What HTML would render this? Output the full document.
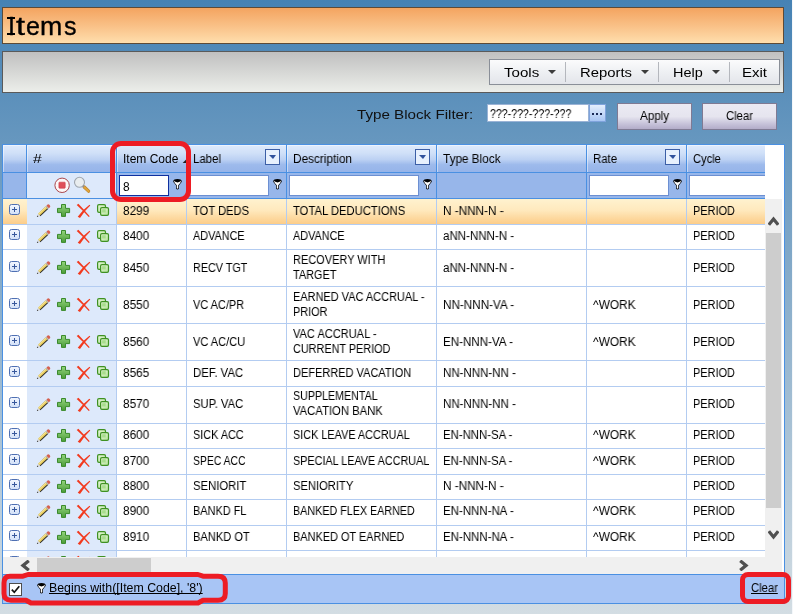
<!DOCTYPE html><html><head><meta charset="utf-8"><title>Items</title><style>
*{box-sizing:border-box;margin:0;padding:0}
html,body{width:793px;height:614px;overflow:hidden}
body{font-family:"Liberation Sans",sans-serif;font-size:12px;color:#000;
 background:linear-gradient(to bottom,#4682b4 0px,#d3dde3 614px);position:relative}
.abs{position:absolute}
#edge{left:792px;top:0;width:1px;height:614px;background:#f4f7fa}
#title{left:2px;top:7px;width:782px;height:37px;border:1px solid #5e4a36;
 background:linear-gradient(to bottom,#f4a460 0%,#f9c086 50%,#ffdead 100%)}
#title span{position:absolute;top:4px;font-size:25px;line-height:28px;white-space:nowrap;transform-origin:0 50%;will-change:transform;-webkit-text-stroke:0.35px #000}
#title i{position:absolute;background:#000;height:2px;left:4.3px;width:7.3px}
#tool{left:2px;top:51px;width:782px;height:42px;border:1px solid #5a5a5a;
 background:linear-gradient(to bottom,#c0c0c0 0%,#d6d7d5 50%,#eceeea 100%)}
#menu{left:489px;top:59px;width:291px;height:26px;border:1px solid #8a8f98;
 background:linear-gradient(to bottom,#fbfbfc 0%,#eef0f3 50%,#e3e5ea 100%)}
.mi{position:absolute;top:1px;height:24px;line-height:24px;font-size:13px;white-space:nowrap}
.msep{position:absolute;top:2px;width:1px;height:20px;background:#b4b7bd}
.tri{position:absolute;width:0;height:0;border-left:4.4px solid transparent;border-right:4.4px solid transparent;border-top:4.8px solid #3c3c3c}
#tbl{left:357px;top:107px;font-size:12px;line-height:16px;white-space:nowrap;color:#111}
#tbin{left:487px;top:104px;width:102px;height:18px;background:#fff;border:1px solid #9ab3d6;font-size:12px;line-height:19px;padding-left:2px;white-space:nowrap}
#tbbtn{left:589px;top:104px;width:17px;height:18px;border:1px solid #7fa3dc;background:linear-gradient(to bottom,#e4eefc,#a9c6f3);font-size:11px;font-weight:bold;line-height:10px;text-align:center}
#tbbtn i{position:absolute;top:8px;width:2px;height:2px;background:#1a2a55}
.btn{position:absolute;top:103px;height:27px;border:1px solid #7f7a93;background:linear-gradient(to bottom,#ebeaf3 0%,#e6e5ef 50%,#c6c2d9 80%,#b3adc9 100%);font-size:12px;line-height:25px;text-align:center}
#grid{left:2px;top:144px;width:783px;height:460px;background:#fff;border:1px solid #4a90e2;overflow:hidden}
.hc{position:absolute;top:0;height:27px;background:linear-gradient(to bottom,#deeafc 0%,#d0e0f8 30%,#bcd1f3 54%,#9dbaec 73%,#96b4e9 100%);border-right:1px solid #4a90e2;line-height:29px;padding-left:6px;white-space:nowrap;overflow:hidden;box-shadow:inset 1px 1px 0 rgba(255,255,255,.45)}
.fc{position:absolute;top:27px;height:27px;background:#97b6ea;border-right:1px solid #4a90e2;border-top:1px solid #4a90e2;border-bottom:1px solid #4a90e2}
.fin{position:absolute;top:2px;height:21px;background:#fff;border:1px solid #6c8fd2}
.hbtn{position:absolute;top:4px;width:15px;height:16px;border:1px solid #3c5fa6;background:#e7f0fd}
.hbtn i{position:absolute;left:3px;top:5px;width:0;height:0;border-left:4px solid transparent;border-right:3.5px solid transparent;border-top:4px solid #2f519c}
.row{position:absolute;left:0;width:784px;border-bottom:1px solid #b3ccf1}
.c{position:absolute;top:0;bottom:0;border-right:1px solid #b3ccf1;padding-left:6px;white-space:nowrap;overflow:hidden;display:flex;flex-direction:column;justify-content:center;align-items:flex-start;line-height:14.7px}
.sel .c{background:linear-gradient(to bottom,#fff2cf 0%,#ffe9bd 45%,#fdd9a0 75%,#fccd8a 100%)}
.c.cmd{background:#dde9fb !important;padding:0}
.c.exp{padding:0;border-right:none}
.ico{position:absolute;width:16px;height:16px}
.exb{position:absolute;left:6px;width:11px;height:11px;border:1px solid #4f70b3;border-radius:2.5px;background:linear-gradient(to bottom,#f2f6fe,#d3e1f8)}
.exb:before{content:"";position:absolute;left:2px;top:4px;width:5px;height:1px;background:#38589c}
.exb:after{content:"";position:absolute;left:4px;top:2px;width:1px;height:5px;background:#38589c}
.t{display:inline-block;transform-origin:0 50%;white-space:nowrap;text-decoration:inherit;will-change:transform}
.t.b{display:block;width:max-content}
.u .t{text-decoration:underline;text-decoration-skip-ink:none}
.red{position:absolute;border:5px solid #ed1c24;border-radius:11px}
</style></head><body>
<svg width="0" height="0" style="position:absolute"><defs><linearGradient id="pg" x1="0" y1="0" x2="0" y2="1"><stop offset="0" stop-color="#93d47d"/><stop offset="1" stop-color="#4b9c38"/></linearGradient><linearGradient id="cg" x1="0" y1="0" x2="1" y2="1"><stop offset="0" stop-color="#e9f9dc"/><stop offset="1" stop-color="#b2e197"/></linearGradient><symbol id="pencil" viewBox="0 0 16 16"><g transform="translate(1.9,13.9) rotate(-43)"><path d="M3 -1.5 H13.6 V1.9 H3Z" fill="#2b2b2b"/><path d="M3 -1.6 H13.6 V1.0 H3Z" fill="#e9cd5c"/><path d="M3 -1.6 H13.6 V-0.6 H3Z" fill="#f6e59a"/><path d="M0 0 L3 -1.6 L3 1.8Z" fill="#d8d8d8"/><path d="M0 0 L1.3 -0.7 L1.3 0.8Z" fill="#222"/><path d="M13.6 -1.7 H14.6 V1.9 H13.6Z" fill="#b9b9b9"/><path d="M14.6 -1.7 H16.2 Q17.4 -1.7 17.4 0 Q17.4 1.8 16.2 1.8 H14.6Z" fill="#d5604f"/></g></symbol><symbol id="plus" viewBox="0 0 16 16"><path d="M6.5 1.5 H10.5 V5.4 H14.6 V9.6 H10.5 V13.4 H6.5 V9.6 H2.5 V5.4 H6.5 Z" fill="url(#pg)" stroke="#3a8a2b" stroke-width="1" stroke-linejoin="round"/></symbol><symbol id="cross" viewBox="0 0 16 16"><path d="M1.7 2.1 L3.4 0.8 Q8.6 6.3 14.7 13.2 L13.8 14.1 Q8 7.8 1.7 2.1Z" fill="#f23a1e"/><path d="M14.5 1.8 L15.3 2.6 Q9.2 8.2 5.0 15.1 L2.7 13.7 Q7.4 7.0 14.5 1.8Z" fill="#f23a1e"/></symbol><symbol id="copy" viewBox="0 0 16 16"><rect x="2.6" y="1.6" width="7.9" height="7.7" rx="1.4" fill="url(#cg)" stroke="#3f9122" stroke-width="1.2"/><rect x="5.6" y="4.7" width="7.9" height="7.6" rx="1.4" fill="url(#cg)" stroke="#3f9122" stroke-width="1.2"/><rect x="7.1" y="6.2" width="3.6" height="3.3" fill="#a3da86" opacity="0.9"/></symbol><symbol id="fun" viewBox="0 0 9 11"><path d="M0.2 2.3 Q0.6 0.1 4.5 0 Q8.4 0.1 8.8 2.3 Q8.8 3.4 7.4 4.4 L5.9 6.4 L5.9 9.7 Q4.5 11.3 3.1 9.7 L3.1 6.4 L1.6 4.4 Q0.2 3.4 0.2 2.3 Z" fill="#000"/><path d="M0.8 1.6 Q1.4 4.6 3.8 6.2 L3.8 9.3 Q4.5 10 5.2 9.3 L5.2 6.2 Q7.6 4.6 8.2 1.6 Q7.0 3.3 4.5 3.4 Q2.0 3.3 0.8 1.6Z" fill="#fff"/></symbol></defs></svg>
<div class="abs" id="edge"></div>
<div class="abs" id="title"><span style="left:4.7px">I</span><i style="top:9.2px"></i><i style="top:25.3px"></i><span style="left:13.2px;transform:scaleX(1.3)">t</span><span style="left:22.7px">e</span><span style="left:37px;transform:scaleX(1.07)">m</span><span style="left:60.9px">s</span></div>
<div class="abs" id="tool"></div>
<div class="abs" id="menu"><span class="mi" style="left:14px"><span class="t" style="transform:scaleX(1.1598)">Tools</span></span><i class="tri" style="left:58.2px;top:9.6px"></i><i class="msep" style="left:75px"></i><span class="mi" style="left:89.5px"><span class="t" style="transform:scaleX(1.1423)">Reports</span></span><i class="tri" style="left:150.9px;top:9.6px"></i><i class="msep" style="left:168px"></i><span class="mi" style="left:183px"><span class="t" style="transform:scaleX(1.1108)">Help</span></span><i class="tri" style="left:222.2px;top:9.6px"></i><i class="msep" style="left:239px"></i><span class="mi" style="left:252px"><span class="t" style="transform:scaleX(1.1536)">Exit</span></span></div>
<div class="abs" id="tbl"><span class="t" style="transform:scaleX(1.2637)">Type Block Filter:</span></div>
<div class="abs" id="tbin"><span class="t" style="transform:scaleX(0.8832)">???-???-???-???</span></div>
<div class="abs" id="tbbtn"><i style="left:2px"></i><i style="left:6px"></i><i style="left:10px"></i></div>
<div class="btn" style="left:617px;width:75px;padding-left:2px"><span class="t" style="transform:scaleX(0.9722)">Apply</span></div>
<div class="btn" style="left:702px;width:75px;padding-left:2px"><span class="t" style="transform:scaleX(0.9382)">Clear</span></div>
<div class="abs" id="grid"><div class="abs" style="left:0;top:0;width:762px;height:412px;overflow:hidden"><div class="hc" style="left:0px;width:24px"></div><div class="fc" style="left:0px;width:24px;"></div><div class="hc" style="left:24px;width:90px"><span class="t" style="transform:scaleX(1.3089)">#</span></div><div class="fc" style="left:24px;width:90px;background:#dde9fb;"></div><div class="hc" style="left:114px;width:70px"><span class="t" style="transform:scaleX(0.9992)">Item Code</span></div><div class="fc" style="left:114px;width:70px;"><div class="fin" style="left:2px;width:50px;border:1px solid #0f2f9f;"><span style="position:absolute;left:3px;top:3.5px;line-height:14px"><span class="t" style="transform:scaleX(0.9817)">8</span></span></div><svg class="abs" style="left:56px;top:6px" width="9" height="11"><use href="#fun"/></svg></div><div class="hc" style="left:184px;width:100px"><span class="t" style="transform:scaleX(0.9531)">Label</span><span class="hbtn" style="left:78px"><i></i></span></div><div class="fc" style="left:184px;width:100px;"><div class="fin" style="left:2px;width:80px;"></div><svg class="abs" style="left:86px;top:6px" width="9" height="11"><use href="#fun"/></svg></div><div class="hc" style="left:284px;width:150px"><span class="t" style="transform:scaleX(0.9836)">Description</span><span class="hbtn" style="left:128px"><i></i></span></div><div class="fc" style="left:284px;width:150px;"><div class="fin" style="left:2px;width:130px;"></div><svg class="abs" style="left:136px;top:6px" width="9" height="11"><use href="#fun"/></svg></div><div class="hc" style="left:434px;width:150px"><span class="t" style="transform:scaleX(0.9804)">Type Block</span></div><div class="fc" style="left:434px;width:150px;"></div><div class="hc" style="left:584px;width:100px"><span class="t" style="transform:scaleX(0.9501)">Rate</span><span class="hbtn" style="left:78px"><i></i></span></div><div class="fc" style="left:584px;width:100px;"><div class="fin" style="left:2px;width:80px;"></div><svg class="abs" style="left:86px;top:6px" width="9" height="11"><use href="#fun"/></svg></div><div class="hc" style="left:684px;width:100px"><span class="t" style="transform:scaleX(0.9262)">Cycle</span></div><div class="fc" style="left:684px;width:100px;"><div class="fin" style="left:2px;width:80px;"></div><svg class="abs" style="left:86px;top:6px" width="9" height="11"><use href="#fun"/></svg></div><svg class="abs" style="left:179px;top:13.8px" width="4.6" height="4.6" viewBox="0 0 4 4"><path d="M4 0 L4 4 L0 4Z" fill="#222"/></svg><svg class="abs" style="left:51px;top:32px" width="16" height="16" viewBox="0 0 16 16"><circle cx="8.1" cy="8.3" r="7.2" fill="#fdf7f7" stroke="#a9454b" stroke-width="1"/><rect x="4.9" y="5.2" width="6.3" height="6" rx="0.6" fill="#df4f59" stroke="#cc3a46" stroke-width="0.6"/></svg><svg class="abs" style="left:70px;top:31px" width="18" height="18" viewBox="0 0 18 18"><circle cx="6.5" cy="6.3" r="5" fill="#e9edef" stroke="#9fa6ae" stroke-width="1.1"/><path d="M11.2 11 L15.6 15.2" stroke="#b9822a" stroke-width="3.2" stroke-linecap="round"/><path d="M11.2 11 L15.6 15.2" stroke="#e0a43c" stroke-width="2" stroke-linecap="round"/><path d="M9.9 9.7 L11 10.8" stroke="#8a8f96" stroke-width="1.5"/></svg><div class="row sel" style="top:54px;height:26px"><div class="c exp" style="left:0px;width:24px"><span class="exb" style="top:5px"></span></div><div class="c cmd" style="left:24px;width:90px"><svg class="ico" style="left:8px;top:4px"><use href="#pencil"/></svg><svg class="ico" style="left:28px;top:4px"><use href="#plus"/></svg><svg class="ico" style="left:48px;top:4px"><use href="#cross"/></svg><svg class="ico" style="left:68px;top:4px"><use href="#copy"/></svg></div><div class="c" style="left:114px;width:70px"><span class="t" style="transform:scaleX(0.9817)">8299</span></div><div class="c" style="left:184px;width:100px"><span class="t" style="transform:scaleX(0.9300)">TOT DEDS</span></div><div class="c" style="left:284px;width:150px"><div><span class="t b" style="transform:scaleX(0.9372)">TOTAL DEDUCTIONS</span></div></div><div class="c" style="left:434px;width:150px"><span class="t" style="transform:scaleX(0.9774)">N -NNN-N -</span></div><div class="c" style="left:584px;width:100px"></div><div class="c" style="left:684px;width:100px"><span class="t" style="transform:scaleX(0.9116)">PERIOD</span></div></div><div class="row" style="top:80px;height:25px"><div class="c exp" style="left:0px;width:24px"><span class="exb" style="top:4px"></span></div><div class="c cmd" style="left:24px;width:90px"><svg class="ico" style="left:8px;top:4px"><use href="#pencil"/></svg><svg class="ico" style="left:28px;top:4px"><use href="#plus"/></svg><svg class="ico" style="left:48px;top:4px"><use href="#cross"/></svg><svg class="ico" style="left:68px;top:4px"><use href="#copy"/></svg></div><div class="c" style="left:114px;width:70px;padding-bottom:2px"><span class="t" style="transform:scaleX(0.9817)">8400</span></div><div class="c" style="left:184px;width:100px;padding-bottom:2px"><span class="t" style="transform:scaleX(0.9043)">ADVANCE</span></div><div class="c" style="left:284px;width:150px;padding-bottom:2px"><div><span class="t b" style="transform:scaleX(0.9043)">ADVANCE</span></div></div><div class="c" style="left:434px;width:150px;padding-bottom:2px"><span class="t" style="transform:scaleX(0.9614)">aNN-NNN-N -</span></div><div class="c" style="left:584px;width:100px;padding-bottom:2px"></div><div class="c" style="left:684px;width:100px;padding-bottom:2px"><span class="t" style="transform:scaleX(0.9116)">PERIOD</span></div></div><div class="row" style="top:105px;height:37px"><div class="c exp" style="left:0px;width:24px"><span class="exb" style="top:11px"></span></div><div class="c cmd" style="left:24px;width:90px"><svg class="ico" style="left:8px;top:10px"><use href="#pencil"/></svg><svg class="ico" style="left:28px;top:10px"><use href="#plus"/></svg><svg class="ico" style="left:48px;top:10px"><use href="#cross"/></svg><svg class="ico" style="left:68px;top:10px"><use href="#copy"/></svg></div><div class="c" style="left:114px;width:70px"><span class="t" style="transform:scaleX(0.9817)">8450</span></div><div class="c" style="left:184px;width:100px"><span class="t" style="transform:scaleX(0.8993)">RECV TGT</span></div><div class="c" style="left:284px;width:150px"><div><span class="t b" style="transform:scaleX(0.9153)">RECOVERY WITH</span><span class="t b" style="transform:scaleX(0.9087)">TARGET</span></div></div><div class="c" style="left:434px;width:150px"><span class="t" style="transform:scaleX(0.9614)">aNN-NNN-N -</span></div><div class="c" style="left:584px;width:100px"></div><div class="c" style="left:684px;width:100px"><span class="t" style="transform:scaleX(0.9116)">PERIOD</span></div></div><div class="row" style="top:142px;height:37px"><div class="c exp" style="left:0px;width:24px"><span class="exb" style="top:11px"></span></div><div class="c cmd" style="left:24px;width:90px"><svg class="ico" style="left:8px;top:10px"><use href="#pencil"/></svg><svg class="ico" style="left:28px;top:10px"><use href="#plus"/></svg><svg class="ico" style="left:48px;top:10px"><use href="#cross"/></svg><svg class="ico" style="left:68px;top:10px"><use href="#copy"/></svg></div><div class="c" style="left:114px;width:70px"><span class="t" style="transform:scaleX(0.9817)">8550</span></div><div class="c" style="left:184px;width:100px"><span class="t" style="transform:scaleX(0.9140)">VC AC/PR</span></div><div class="c" style="left:284px;width:150px"><div><span class="t b" style="transform:scaleX(0.9133)">EARNED VAC ACCRUAL -</span><span class="t b" style="transform:scaleX(0.9078)">PRIOR</span></div></div><div class="c" style="left:434px;width:150px"><span class="t" style="transform:scaleX(0.9739)">NN-NNN-VA -</span></div><div class="c" style="left:584px;width:100px"><span class="t" style="transform:scaleX(0.9888)">^WORK</span></div><div class="c" style="left:684px;width:100px"><span class="t" style="transform:scaleX(0.9116)">PERIOD</span></div></div><div class="row" style="top:179px;height:37px"><div class="c exp" style="left:0px;width:24px"><span class="exb" style="top:11px"></span></div><div class="c cmd" style="left:24px;width:90px"><svg class="ico" style="left:8px;top:10px"><use href="#pencil"/></svg><svg class="ico" style="left:28px;top:10px"><use href="#plus"/></svg><svg class="ico" style="left:48px;top:10px"><use href="#cross"/></svg><svg class="ico" style="left:68px;top:10px"><use href="#copy"/></svg></div><div class="c" style="left:114px;width:70px"><span class="t" style="transform:scaleX(0.9817)">8560</span></div><div class="c" style="left:184px;width:100px"><span class="t" style="transform:scaleX(0.9211)">VC AC/CU</span></div><div class="c" style="left:284px;width:150px"><div><span class="t b" style="transform:scaleX(0.9211)">VAC ACCRUAL -</span><span class="t b" style="transform:scaleX(0.9039)">CURRENT PERIOD</span></div></div><div class="c" style="left:434px;width:150px"><span class="t" style="transform:scaleX(0.9652)">EN-NNN-VA -</span></div><div class="c" style="left:584px;width:100px"><span class="t" style="transform:scaleX(0.9888)">^WORK</span></div><div class="c" style="left:684px;width:100px"><span class="t" style="transform:scaleX(0.9116)">PERIOD</span></div></div><div class="row" style="top:216px;height:26px"><div class="c exp" style="left:0px;width:24px"><span class="exb" style="top:5px"></span></div><div class="c cmd" style="left:24px;width:90px"><svg class="ico" style="left:8px;top:4px"><use href="#pencil"/></svg><svg class="ico" style="left:28px;top:4px"><use href="#plus"/></svg><svg class="ico" style="left:48px;top:4px"><use href="#cross"/></svg><svg class="ico" style="left:68px;top:4px"><use href="#copy"/></svg></div><div class="c" style="left:114px;width:70px"><span class="t" style="transform:scaleX(0.9817)">8565</span></div><div class="c" style="left:184px;width:100px"><span class="t" style="transform:scaleX(0.9432)">DEF. VAC</span></div><div class="c" style="left:284px;width:150px"><div><span class="t b" style="transform:scaleX(0.9168)">DEFERRED VACATION</span></div></div><div class="c" style="left:434px;width:150px"><span class="t" style="transform:scaleX(0.9587)">NN-NNN-NN -</span></div><div class="c" style="left:584px;width:100px"></div><div class="c" style="left:684px;width:100px"><span class="t" style="transform:scaleX(0.9116)">PERIOD</span></div></div><div class="row" style="top:242px;height:37px"><div class="c exp" style="left:0px;width:24px"><span class="exb" style="top:10px"></span></div><div class="c cmd" style="left:24px;width:90px"><svg class="ico" style="left:8px;top:10px"><use href="#pencil"/></svg><svg class="ico" style="left:28px;top:10px"><use href="#plus"/></svg><svg class="ico" style="left:48px;top:10px"><use href="#cross"/></svg><svg class="ico" style="left:68px;top:10px"><use href="#copy"/></svg></div><div class="c" style="left:114px;width:70px;padding-bottom:2px"><span class="t" style="transform:scaleX(0.9817)">8570</span></div><div class="c" style="left:184px;width:100px;padding-bottom:2px"><span class="t" style="transform:scaleX(0.9358)">SUP. VAC</span></div><div class="c" style="left:284px;width:150px;padding-bottom:2px"><div><span class="t b" style="transform:scaleX(0.8899)">SUPPLEMENTAL</span><span class="t b" style="transform:scaleX(0.9390)">VACATION BANK</span></div></div><div class="c" style="left:434px;width:150px;padding-bottom:2px"><span class="t" style="transform:scaleX(0.9587)">NN-NNN-NN -</span></div><div class="c" style="left:584px;width:100px;padding-bottom:2px"></div><div class="c" style="left:684px;width:100px;padding-bottom:2px"><span class="t" style="transform:scaleX(0.9116)">PERIOD</span></div></div><div class="row" style="top:279px;height:25px"><div class="c exp" style="left:0px;width:24px"><span class="exb" style="top:4px"></span></div><div class="c cmd" style="left:24px;width:90px"><svg class="ico" style="left:8px;top:4px"><use href="#pencil"/></svg><svg class="ico" style="left:28px;top:4px"><use href="#plus"/></svg><svg class="ico" style="left:48px;top:4px"><use href="#cross"/></svg><svg class="ico" style="left:68px;top:4px"><use href="#copy"/></svg></div><div class="c" style="left:114px;width:70px;padding-bottom:2px"><span class="t" style="transform:scaleX(0.9817)">8600</span></div><div class="c" style="left:184px;width:100px;padding-bottom:2px"><span class="t" style="transform:scaleX(0.9050)">SICK ACC</span></div><div class="c" style="left:284px;width:150px;padding-bottom:2px"><div><span class="t b" style="transform:scaleX(0.9038)">SICK LEAVE ACCRUAL</span></div></div><div class="c" style="left:434px;width:150px;padding-bottom:2px"><span class="t" style="transform:scaleX(0.9468)">EN-NNN-SA -</span></div><div class="c" style="left:584px;width:100px;padding-bottom:2px"><span class="t" style="transform:scaleX(0.9888)">^WORK</span></div><div class="c" style="left:684px;width:100px;padding-bottom:2px"><span class="t" style="transform:scaleX(0.9116)">PERIOD</span></div></div><div class="row" style="top:304px;height:26px"><div class="c exp" style="left:0px;width:24px"><span class="exb" style="top:5px"></span></div><div class="c cmd" style="left:24px;width:90px"><svg class="ico" style="left:8px;top:4px"><use href="#pencil"/></svg><svg class="ico" style="left:28px;top:4px"><use href="#plus"/></svg><svg class="ico" style="left:48px;top:4px"><use href="#cross"/></svg><svg class="ico" style="left:68px;top:4px"><use href="#copy"/></svg></div><div class="c" style="left:114px;width:70px"><span class="t" style="transform:scaleX(0.9817)">8700</span></div><div class="c" style="left:184px;width:100px"><span class="t" style="transform:scaleX(0.8670)">SPEC ACC</span></div><div class="c" style="left:284px;width:150px"><div><span class="t b" style="transform:scaleX(0.9002)">SPECIAL LEAVE ACCRUAL</span></div></div><div class="c" style="left:434px;width:150px"><span class="t" style="transform:scaleX(0.9468)">EN-NNN-SA -</span></div><div class="c" style="left:584px;width:100px"><span class="t" style="transform:scaleX(0.9888)">^WORK</span></div><div class="c" style="left:684px;width:100px"><span class="t" style="transform:scaleX(0.9116)">PERIOD</span></div></div><div class="row" style="top:330px;height:25px"><div class="c exp" style="left:0px;width:24px"><span class="exb" style="top:4px"></span></div><div class="c cmd" style="left:24px;width:90px"><svg class="ico" style="left:8px;top:4px"><use href="#pencil"/></svg><svg class="ico" style="left:28px;top:4px"><use href="#plus"/></svg><svg class="ico" style="left:48px;top:4px"><use href="#cross"/></svg><svg class="ico" style="left:68px;top:4px"><use href="#copy"/></svg></div><div class="c" style="left:114px;width:70px;padding-bottom:2px"><span class="t" style="transform:scaleX(0.9817)">8800</span></div><div class="c" style="left:184px;width:100px;padding-bottom:2px"><span class="t" style="transform:scaleX(0.9412)">SENIORIT</span></div><div class="c" style="left:284px;width:150px;padding-bottom:2px"><div><span class="t b" style="transform:scaleX(0.9316)">SENIORITY</span></div></div><div class="c" style="left:434px;width:150px;padding-bottom:2px"><span class="t" style="transform:scaleX(0.9774)">N -NNN-N -</span></div><div class="c" style="left:584px;width:100px;padding-bottom:2px"></div><div class="c" style="left:684px;width:100px;padding-bottom:2px"><span class="t" style="transform:scaleX(0.9116)">PERIOD</span></div></div><div class="row" style="top:355px;height:26px"><div class="c exp" style="left:0px;width:24px"><span class="exb" style="top:4px"></span></div><div class="c cmd" style="left:24px;width:90px"><svg class="ico" style="left:8px;top:4px"><use href="#pencil"/></svg><svg class="ico" style="left:28px;top:4px"><use href="#plus"/></svg><svg class="ico" style="left:48px;top:4px"><use href="#cross"/></svg><svg class="ico" style="left:68px;top:4px"><use href="#copy"/></svg></div><div class="c" style="left:114px;width:70px;padding-bottom:2px"><span class="t" style="transform:scaleX(0.9817)">8900</span></div><div class="c" style="left:184px;width:100px;padding-bottom:2px"><span class="t" style="transform:scaleX(0.9095)">BANKD FL</span></div><div class="c" style="left:284px;width:150px;padding-bottom:2px"><div><span class="t b" style="transform:scaleX(0.8954)">BANKED FLEX EARNED</span></div></div><div class="c" style="left:434px;width:150px;padding-bottom:2px"><span class="t" style="transform:scaleX(0.9562)">EN-NNN-NA -</span></div><div class="c" style="left:584px;width:100px;padding-bottom:2px"><span class="t" style="transform:scaleX(0.9888)">^WORK</span></div><div class="c" style="left:684px;width:100px;padding-bottom:2px"><span class="t" style="transform:scaleX(0.9116)">PERIOD</span></div></div><div class="row" style="top:381px;height:25px"><div class="c exp" style="left:0px;width:24px"><span class="exb" style="top:4px"></span></div><div class="c cmd" style="left:24px;width:90px"><svg class="ico" style="left:8px;top:4px"><use href="#pencil"/></svg><svg class="ico" style="left:28px;top:4px"><use href="#plus"/></svg><svg class="ico" style="left:48px;top:4px"><use href="#cross"/></svg><svg class="ico" style="left:68px;top:4px"><use href="#copy"/></svg></div><div class="c" style="left:114px;width:70px;padding-bottom:2px"><span class="t" style="transform:scaleX(0.9817)">8910</span></div><div class="c" style="left:184px;width:100px;padding-bottom:2px"><span class="t" style="transform:scaleX(0.9236)">BANKD OT</span></div><div class="c" style="left:284px;width:150px;padding-bottom:2px"><div><span class="t b" style="transform:scaleX(0.9096)">BANKED OT EARNED</span></div></div><div class="c" style="left:434px;width:150px;padding-bottom:2px"><span class="t" style="transform:scaleX(0.9562)">EN-NNN-NA -</span></div><div class="c" style="left:584px;width:100px;padding-bottom:2px"><span class="t" style="transform:scaleX(0.9888)">^WORK</span></div><div class="c" style="left:684px;width:100px;padding-bottom:2px"><span class="t" style="transform:scaleX(0.9116)">PERIOD</span></div></div><div class="row" style="top:406px;height:26px"><div class="c exp" style="left:0px;width:24px"><span class="exb" style="top:5px"></span></div><div class="c cmd" style="left:24px;width:90px"><svg class="ico" style="left:8px;top:4px"><use href="#pencil"/></svg><svg class="ico" style="left:28px;top:4px"><use href="#plus"/></svg><svg class="ico" style="left:48px;top:4px"><use href="#cross"/></svg><svg class="ico" style="left:68px;top:4px"><use href="#copy"/></svg></div><div class="c" style="left:114px;width:70px"><span class="t" style="transform:scaleX(0.9817)">8920</span></div><div class="c" style="left:184px;width:100px"></div><div class="c" style="left:284px;width:150px"><div></div></div><div class="c" style="left:434px;width:150px"></div><div class="c" style="left:584px;width:100px"></div><div class="c" style="left:684px;width:100px"></div></div></div><div class="abs" style="left:762px;top:54px;width:17px;height:358px;background:#f0f0f0"></div><div class="abs" style="left:763px;top:88px;width:15px;height:275px;background:#cdcdcd"></div><svg class="abs" style="left:765px;top:70px" width="11" height="11" viewBox="0 0 11 11"><path d="M0.8 9.8 L5.5 4.0 L10.2 9.8" stroke="#505050" stroke-width="3.3" fill="none"/></svg><svg class="abs" style="left:765px;top:385px" width="11" height="11" viewBox="0 0 11 11"><path d="M0.8 1.2 L5.5 7.0 L10.2 1.2" stroke="#505050" stroke-width="3.3" fill="none"/></svg><div class="abs" style="left:0;top:412px;width:779px;height:17px;background:#f0f0f0"></div><div class="abs" style="left:34px;top:413px;width:114px;height:16px;background:#cdcdcd"></div><svg class="abs" style="left:16px;top:415px" width="11" height="11" viewBox="0 0 11 11"><path d="M9.8 0.8 L4.0 5.5 L9.8 10.2" stroke="#505050" stroke-width="3.3" fill="none"/></svg><svg class="abs" style="left:735.5px;top:415px" width="11" height="11" viewBox="0 0 11 11"><path d="M1.2 0.8 L7.0 5.5 L1.2 10.2" stroke="#505050" stroke-width="3.3" fill="none"/></svg><div class="abs" style="left:0;top:429px;width:781px;height:30px;background:#a8c5f5;border-top:1px solid #4a90e2"></div><div class="abs" style="left:6px;top:438px;width:13px;height:13px;background:#fff;border:1px solid #4d4d4d"><svg class="abs" style="left:0;top:0" width="11" height="11" viewBox="0 0 11 11"><path d="M1.8 5.6 L4.3 8.3 L9.3 2.2" stroke="#111" stroke-width="1.7" fill="none"/></svg></div><svg class="abs" style="left:34px;top:438px" width="9" height="11"><use href="#fun"/></svg><div class="abs u" style="left:46px;top:435px;line-height:16px;white-space:nowrap;color:#000"><span class="t" style="transform:scaleX(1.0291)">Begins with([Item Code], '8')</span></div><div class="abs u" style="left:748px;top:435px;line-height:16px;white-space:nowrap;color:#000"><span class="t" style="transform:scaleX(0.9382)">Clear</span></div></div>
<div class="red" style="left:110px;top:141px;width:81px;height:61px"></div>
<svg class="abs" style="left:0;top:568px" width="240" height="42" viewBox="0 568 240 42"><path d="M10 576.2 L23 576.2 L28 574.5 L198 574.5 L203 576.2 L218 576.2 Q225.3 576.2 225.3 583 L225.3 593.5 Q225.3 600.3 218 600.3 L203 600.3 L198 603 L31 603 L26 600.2 L11 600.2 Q4 600.2 4 593.5 L4 583 Q4 576.2 10 576.2 Z" fill="none" stroke="#ed1c24" stroke-width="5" stroke-linejoin="round"/></svg>
<div class="red" style="left:740px;top:572px;width:51px;height:32px;border-radius:8px"></div>
</body></html>
